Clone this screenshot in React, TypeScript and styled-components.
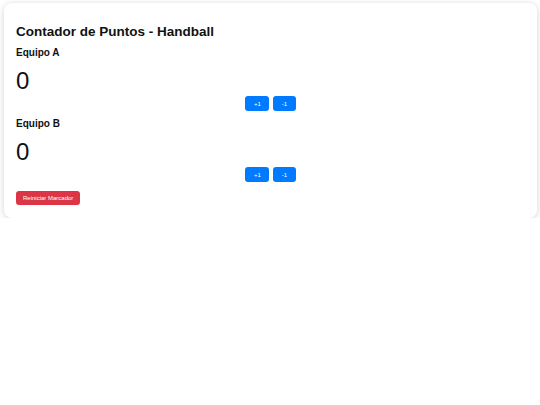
import React, { useState } from "react";
import styled, { createGlobalStyle } from "styled-components";

const Global = createGlobalStyle`
  html, body { margin: 0; padding: 0; background: #ffffff; }
  body { font-family: "Liberation Sans", Arial, sans-serif; color: #111111; }
`;

const Card = styled.div`
  margin: 3px 3px 0 4px;
  padding: 12px 12px 13px;
  background: #ffffff;
  border-radius: 8px;
  box-shadow: 0 1px 6px rgba(0, 0, 0, 0.18);
`;

const Title = styled.h1`
  margin: 9px 0 7px;
  font-size: 13.5px;
  line-height: 16px;
  font-weight: 700;
`;

const Team = styled.section<{ $last?: boolean }>`
  display: flex;
  flex-direction: column;
  margin-bottom: ${(p) => (p.$last ? "9px" : "7px")};
`;

const TeamName = styled.h2`
  margin: 0 0 8px;
  font-size: 10px;
  line-height: 12px;
  font-weight: 700;
`;

const Score = styled.div`
  font-size: 24px;
  line-height: 28px;
  margin-bottom: 1px;
`;

const ButtonRow = styled.div`
  display: flex;
  justify-content: center;
  gap: 4px;
`;

const Btn = styled.button<{ $variant?: "primary" | "danger" }>`
  font-family: "Liberation Sans", Arial, sans-serif;
  font-size: 6px;
  line-height: 1;
  color: #ffffff;
  background: ${(p) => (p.$variant === "danger" ? "#dc3545" : "#007bff")};
  border: none;
  border-radius: 3px;
  height: ${(p) => (p.$variant === "danger" ? "14px" : "15px")};
  padding: 0 ${(p) => (p.$variant === "danger" ? "7px" : "8.5px")};
  cursor: pointer;
`;

const ResetRow = styled.div`
  display: flex;
`;

export default function App() {
  const [a, setA] = useState(0);
  const [b, setB] = useState(0);
  return (
    <>
      <Global />
      <Card>
        <Title>Contador de Puntos - Handball</Title>
        <Team>
          <TeamName>Equipo A</TeamName>
          <Score>{a}</Score>
          <ButtonRow>
            <Btn onClick={() => setA(a + 1)}>+1</Btn>
            <Btn onClick={() => setA(Math.max(0, a - 1))}>-1</Btn>
          </ButtonRow>
        </Team>
        <Team $last>
          <TeamName>Equipo B</TeamName>
          <Score>{b}</Score>
          <ButtonRow>
            <Btn onClick={() => setB(b + 1)}>+1</Btn>
            <Btn onClick={() => setB(Math.max(0, b - 1))}>-1</Btn>
          </ButtonRow>
        </Team>
        <ResetRow>
          <Btn $variant="danger" onClick={() => { setA(0); setB(0); }}>
            Reiniciar Marcador
          </Btn>
        </ResetRow>
      </Card>
    </>
  );
}
